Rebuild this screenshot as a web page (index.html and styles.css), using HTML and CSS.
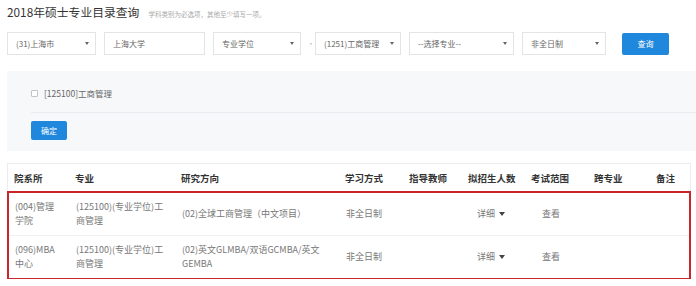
FILE: index.html
```html
<!DOCTYPE html>
<html lang="zh-CN">

<head>
  <meta charset="UTF-8">
  <meta name="viewport" content="width=device-width, initial-scale=1.0">
  <title>2018年硕士专业目录查询</title>
  <link rel="stylesheet" href="styles.css">
</head>

<body>

  <div class="page">
    <h1 class="title">2018年硕士专业目录查询<span class="hint">学科类别为必选项，其他至少填写一项。</span></h1>

    <div class="filters">
      <div class="field select w-province">(31)上海市</div>
      <div class="field w-school">上海大学</div>
      <div class="field select w-type">专业学位</div>
      <span class="dot">·</span>
      <div class="field select w-subject">(1251)工商管理</div>
      <div class="field select w-major">--选择专业--</div>
      <div class="field select w-mode">非全日制</div>
      <button class="btn btn-query">查询</button>
    </div>

    <div class="panel">
      <div class="panel-options">
        <span class="checkbox"></span>[125100]工商管理
      </div>
      <button class="btn btn-ok">确定</button>
    </div>

    <div class="results">
      <div class="row head">
        <div class="cell">院系所</div>
        <div class="cell">专业</div>
        <div class="cell">研究方向</div>
        <div class="cell">学习方式</div>
        <div class="cell">指导教师</div>
        <div class="cell">拟招生人数</div>
        <div class="cell">考试范围</div>
        <div class="cell">跨专业</div>
        <div class="cell">备注</div>
      </div>

      <div class="highlight">
        <div class="row">
          <div class="cell dept">(004)管理学院</div>
          <div class="cell">(125100)(专业学位)工商管理</div>
          <div class="cell">(02)全球工商管理（中文项目）</div>
          <div class="cell">非全日制</div>
          <div class="cell"></div>
          <div class="cell"><span class="more">详细<i class="caret"></i></span></div>
          <div class="cell link">查看</div>
          <div class="cell"></div>
          <div class="cell"></div>
        </div>
        <div class="row">
          <div class="cell dept">(096)MBA中心</div>
          <div class="cell">(125100)(专业学位)工商管理</div>
          <div class="cell">(02)英文GLMBA/双语GCMBA/英文GEMBA</div>
          <div class="cell">非全日制</div>
          <div class="cell"></div>
          <div class="cell"><span class="more">详细<i class="caret"></i></span></div>
          <div class="cell link">查看</div>
          <div class="cell"></div>
          <div class="cell"></div>
        </div>
      </div>
    </div>
  </div>

</body>

</html>
```

FILE: styles.css
```css
body {
  margin: 0;
  font-family: "Noto Sans CJK SC", "Liberation Sans", sans-serif;
  color: #333;
  background: #fff;
}

.page {
  padding: 0 5px 0 7px;
}

.title {
  margin: 0;
  padding-top: 4px;
  font-size: 11.8px;
  line-height: 16px;
  font-weight: normal;
  color: #333;
}

.title .hint {
  margin-left: 9px;
  font-size: 6.5px;
  color: #aaa;
}

/* filter bar */
.filters {
  display: flex;
  align-items: center;
  gap: 8px;
  margin-top: 10px;
}

.field {
  display: flex;
  align-items: center;
  justify-content: space-between;
  height: 23px;
  box-sizing: border-box;
  padding: 0 6px 0 8px;
  border: 1px solid #e4e4e4;
  background: #fff;
  font-size: 8px;
  color: #666;
}

.field.select::after {
  content: "";
  border-left: 2px solid transparent;
  border-right: 2px solid transparent;
  border-top: 3px solid #666;
}

.w-province { width: 89px; }
.w-school { width: 101px; }
.w-type { width: 88px; }
.w-subject { width: 86px; }
.w-major { width: 105px; }
.w-mode { width: 84px; }

.dot {
  width: 2px;
  margin: 0 -2px;
  font-size: 8px;
  color: #bbb;
}

.btn {
  border: 0;
  border-radius: 2px;
  padding: 0;
  background: #2088dc;
  color: #fff;
  font-family: inherit;
  font-size: 8px;
}

.btn-query {
  width: 47px;
  height: 22px;
  margin-left: 8px;
}

/* major picker */
.panel {
  margin: 16px -5px 0 0;
  padding: 15px 0 11px 24px;
  background: #f7f8fa;
}

.panel-options {
  display: flex;
  align-items: center;
  padding-bottom: 12px;
  border-bottom: 1px solid #e9ebee;
  font-size: 8.5px;
  line-height: 14px;
  color: #666;
}

.checkbox {
  width: 5px;
  height: 5px;
  margin-right: 6px;
  border: 1px solid #c4c4c4;
  border-radius: 1px;
  background: #fff;
}

.btn-ok {
  display: block;
  width: 36px;
  height: 19px;
  margin-top: 8px;
}

/* result table */
.results {
  margin-top: 12px;
  border: 1px solid #ececec;
  border-bottom: 0;
}

.row {
  display: grid;
  grid-template-columns: 61px 106px 164px 64px 59px 63px 63px 62px 1fr;
  align-items: center;
}

.cell {
  padding: 0 6px;
}

.row.head {
  height: 27px;
  font-size: 9.5px;
  font-weight: 600;
  color: #333;
}

.highlight {
  margin: 0 -1px -1px;
  border: 2px solid #c9262c;
}

.highlight .row {
  height: 42px;
  font-size: 9px;
  line-height: 14px;
  color: #777;
}

.highlight .row + .row {
  border-top: 1px solid #f0f0f0;
}

.cell.dept {
  padding-right: 12px;
}

.more {
  display: inline-flex;
  align-items: center;
  gap: 4px;
  margin-left: 8px;
}

.cell.link {
  padding-left: 16px;
}

.caret {
  border-left: 3px solid transparent;
  border-right: 3px solid transparent;
  border-top: 4px solid #444;
}
```
